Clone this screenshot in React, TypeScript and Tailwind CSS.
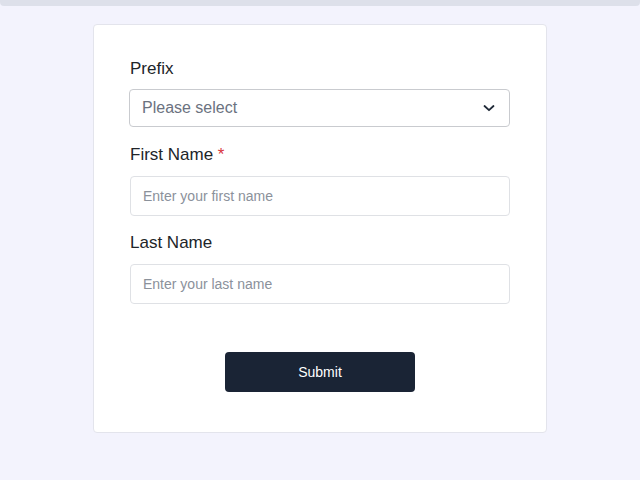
import React from "react";

export default function App() {
  return (
    <div className="min-h-[480px] w-full bg-[#f3f3fd]" style={{ fontFamily: '"Liberation Sans", Arial, sans-serif' }}>
      <div className="h-[6px] w-full rounded-b-[4px] bg-[#dde0ea]" />
      <div className="mx-auto mt-[18px] w-[454px] rounded-[4px] border border-[#e3e4ec] bg-white px-[36px] pt-[32px] pb-[40px]">
        <div className="mb-[16px]">
          <label className="mb-[8px] block text-[17px] leading-[24px] text-[#212529]">Prefix</label>
          <div className="relative -ml-px h-[38px] w-[381px] rounded-[4px] border border-[#c9cbcf] bg-white">
            <div className="flex h-full items-center pl-[12px] text-[16px] text-[#6b7280]">Please select</div>
            <svg className="absolute right-[14px] top-[13px]" width="12" height="10" viewBox="0 0 12 10" fill="none">
              <path d="M1.5 3 L6 7.2 L10.5 3" stroke="#1f2937" strokeWidth="1.8" strokeLinecap="round" strokeLinejoin="round" />
            </svg>
          </div>
        </div>
        <div className="mb-[15px]">
          <label className="mb-[9px] block text-[17px] leading-[24px] text-[#212529]">
            First Name <span className="text-[#d9363e]">*</span>
          </label>
          <input
            className="h-[40px] w-[380px] rounded-[4px] border border-[#dfe1e5] px-[12px] text-[14px] text-[#1f2937] outline-none placeholder:text-[#8b919b]"
            placeholder="Enter your first name"
          />
        </div>
        <div>
          <label className="mb-[9px] block text-[17px] leading-[24px] text-[#212529]">Last Name</label>
          <input
            className="h-[40px] w-[380px] rounded-[4px] border border-[#dfe1e5] px-[12px] text-[14px] text-[#1f2937] outline-none placeholder:text-[#8b919b]"
            placeholder="Enter your last name"
          />
        </div>
        <div className="mt-[48px] flex justify-center">
          <button className="h-[40px] w-[190px] rounded-[4px] bg-[#1a2435] text-[14px] text-white">Submit</button>
        </div>
      </div>
    </div>
  );
}
